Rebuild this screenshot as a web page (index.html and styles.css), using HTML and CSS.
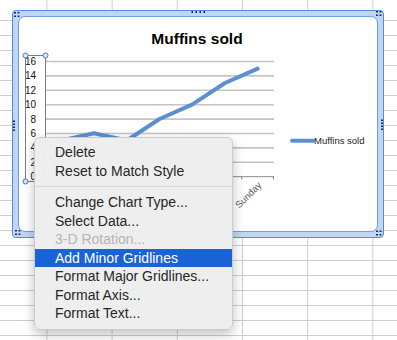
FILE: index.html
```html
<!DOCTYPE html>
<html lang="en">
<head>
    <meta charset="UTF-8">
    <title>Muffins sold</title>
    <link rel="stylesheet" href="styles.css">
</head>
<body>
    <!-- hojas de celdas detrás del gráfico -->
    <div class="sheet"></div>

    <div class="chart-frame">
        <div class="chart-inner">
            <svg class="chart" width="358" height="214" viewBox="19 17 358 214">
                <text class="chart-title" x="197" y="44" text-anchor="middle">Muffins sold</text>

                <g class="gridlines">
                    <line x1="45" y1="61.5" x2="274" y2="61.5"/>
                    <line x1="45" y1="75.9" x2="274" y2="75.9"/>
                    <line x1="45" y1="90.3" x2="274" y2="90.3"/>
                    <line x1="45" y1="104.7" x2="274" y2="104.7"/>
                    <line x1="45" y1="119.1" x2="274" y2="119.1"/>
                    <line x1="45" y1="133.5" x2="274" y2="133.5"/>
                    <line x1="45" y1="147.9" x2="274" y2="147.9"/>
                    <line x1="45" y1="162.3" x2="274" y2="162.3"/>
                </g>

                <g class="axis">
                    <line x1="45" y1="176.7" x2="274" y2="176.7"/>
                    <line x1="45.5" y1="61" x2="45.5" y2="177"/>
                    <line x1="241.7" y1="176.7" x2="241.7" y2="179.5"/>
                    <line x1="273.5" y1="176.7" x2="273.5" y2="179.5"/>
                </g>

                <g class="y-labels">
                    <text x="36" y="65">16</text>
                    <text x="36" y="79.4">14</text>
                    <text x="36" y="93.8">12</text>
                    <text x="36" y="108.2">10</text>
                    <text x="36" y="122.6">8</text>
                    <text x="36" y="137">6</text>
                    <text x="36" y="151.4">4</text>
                    <text x="36" y="165.8">2</text>
                    <text x="36" y="180.2">0</text>
                </g>

                <text class="x-label" transform="translate(262 186) rotate(-45)" text-anchor="end">Sunday</text>

                <polyline class="series" points="61.4,140.5 94,133.3 126.8,140.5 159.5,119 192,104.7 225,83 257.7,68.7"/>

                <!-- eje vertical seleccionado -->
                <rect class="selection" x="25.5" y="55.5" width="20" height="126"/>
                <circle class="handle" cx="25.5" cy="55.5" r="2.5"/>
                <circle class="handle" cx="45.5" cy="55.5" r="2.5"/>
                <circle class="handle" cx="25.5" cy="181.5" r="2.5"/>
                <circle class="handle" cx="45.5" cy="181.5" r="2.5"/>

                <line class="series" x1="292" y1="140.7" x2="313" y2="140.7"/>
                <text class="legend-text" x="314" y="144">Muffins sold</text>
            </svg>
        </div>

        <svg class="grips" width="372" height="228" viewBox="12 10 372 228">
            <g fill="#1d2b52">
                <rect x="14" y="12" width="2" height="1.5"/><rect x="17.5" y="12" width="2" height="1.5"/>
                <rect x="14" y="15.5" width="2" height="1.5"/><rect x="17.5" y="15.5" width="2" height="1.5"/>

                <rect x="376" y="11" width="2" height="1.5"/><rect x="379.5" y="11" width="2" height="1.5"/>
                <rect x="376" y="14.5" width="2" height="1.5"/><rect x="379.5" y="14.5" width="2" height="1.5"/>

                <rect x="191.5" y="11" width="1.5" height="2"/><rect x="195.5" y="11" width="1.5" height="2"/>
                <rect x="199.5" y="11" width="1.5" height="2"/><rect x="203.5" y="11" width="1.5" height="2"/>

                <rect x="13" y="120.5" width="2" height="1.5"/><rect x="13" y="123.5" width="2" height="1.5"/>
                <rect x="13" y="126.5" width="2" height="1.5"/><rect x="13" y="129.5" width="2" height="1.5"/>

                <rect x="381" y="119.5" width="2" height="1.5"/><rect x="381" y="122.5" width="2" height="1.5"/>
                <rect x="381" y="125.5" width="2" height="1.5"/><rect x="381" y="128.5" width="2" height="1.5"/>

                <rect x="15" y="230" width="2" height="1.5"/><rect x="18.5" y="230" width="2" height="1.5"/>
                <rect x="15" y="233.5" width="2" height="1.5"/><rect x="18.5" y="233.5" width="2" height="1.5"/>

                <rect x="376" y="230.5" width="2" height="1.5"/><rect x="379.5" y="230.5" width="2" height="1.5"/>
                <rect x="376" y="234" width="2" height="1.5"/><rect x="379.5" y="234" width="2" height="1.5"/>
            </g>
        </svg>
    </div>

    <!-- menú contextual -->
    <ul class="context-menu">
        <li>Delete</li>
        <li>Reset to Match Style</li>
        <li class="separator"></li>
        <li>Change Chart Type...</li>
        <li>Select Data...</li>
        <li class="disabled">3-D Rotation...</li>
        <li class="active">Add Minor Gridlines</li>
        <li>Format Major Gridlines...</li>
        <li>Format Axis...</li>
        <li>Format Text...</li>
    </ul>
</body>
</html>
```

FILE: styles.css
```css
html, body {
    margin: 0;
    padding: 0;
}
body {
    width: 397px;
    height: 340px;
    overflow: hidden;
    position: relative;
    background-color: white;
    /* columnas de la hoja */
    background-image: linear-gradient(90deg, transparent 45px, #cdcdcd 45px, #cdcdcd 46px, transparent 46px);
    background-size: 65.2px 100%;
    background-position: 1px 0;
    font-family: "Liberation Sans", Arial, sans-serif;
}
.sheet {
    margin-top: 6px;
    height: 334px;
    background-image: linear-gradient(180deg, transparent 14px, #cdcdcd 14px, #cdcdcd 15px);
    background-size: 100% 15px;
}
.chart-frame {
    position: absolute;
    left: 12px;
    top: 10px;
    width: 360px;
    height: 216px;
    padding: 5px;
    border: 1px solid #5a88e0;
    border-radius: 4px;
    background-color: #c0d6f6;
}
.chart-inner {
    width: 358px;
    height: 214px;
    border: 1px solid #6e9be6;
    border-radius: 7px;
    background: white;
    overflow: hidden;
}
.chart {
    display: block;
}
.grips {
    position: absolute;
    left: -1px;
    top: -1px;
}
.chart-title {
    font-size: 15.5px;
    font-weight: bold;
    fill: #000;
}
.gridlines line {
    stroke: #c4c4c4;
    stroke-width: 1.6;
}
.axis line {
    stroke: #8a8a8a;
    stroke-width: 1;
}
.y-labels text {
    font-size: 10px;
    fill: #111;
    text-anchor: end;
}
.x-label {
    font-size: 9.5px;
    fill: #555;
}
.series {
    fill: none;
    stroke: #5b8fd0;
    stroke-width: 4;
    stroke-linejoin: round;
    stroke-linecap: round;
}
.selection {
    fill: none;
    stroke: #7d7d7d;
    stroke-width: 1;
}
.handle {
    fill: #dbe7f6;
    stroke: #4e79ad;
    stroke-width: 1;
}
.legend-text {
    font-size: 9.5px;
    fill: #222;
}
.context-menu {
    position: absolute;
    left: 34px;
    top: 137px;
    width: 197px;
    height: 180px;
    margin: 0;
    padding: 5px 0 6px;
    list-style: none;
    background: rgba(238, 238, 238, 0.98);
    border: 1px solid #cbcbcb;
    border-radius: 6px;
    box-shadow: 0px 4px 12px rgba(0, 0, 0, 0.25);
    font-size: 14px;
    color: #262626;
}
.context-menu li {
    height: 18.5px;
    line-height: 18.5px;
    padding-left: 20px;
    white-space: nowrap;
}
.context-menu li.separator {
    height: 13px;
    padding: 0;
    background: linear-gradient(180deg, transparent 6px, #d6d6d6 6px, #d6d6d6 7px, transparent 7px);
}
.context-menu li.disabled {
    color: #b4b4b4;
}
.context-menu li.active {
    background-color: #1a63d6;
    color: white;
}
```
